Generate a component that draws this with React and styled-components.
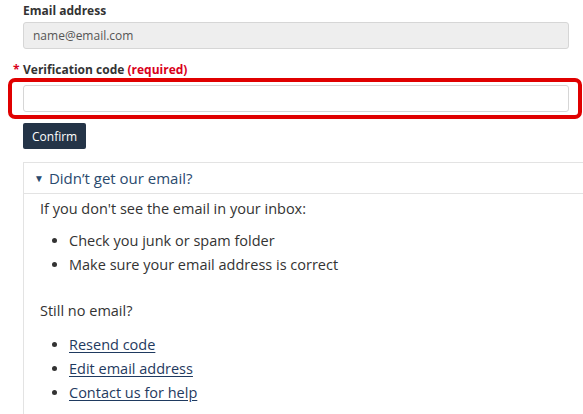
import React from "react";
import styled, { createGlobalStyle } from "styled-components";

const Global = createGlobalStyle`
  html, body { margin: 0; padding: 0; background: #fff; overflow: hidden; }
  body { font-family: "Open Sans", "Noto Sans", sans-serif; color: #333; }
`;

const Page = styled.div`
  width: 546px;
  padding: 2px 0 0 23px;
`;

const Label = styled.label`
  display: block;
  font-size: 12px;
  font-weight: 700;
  color: #333;
  line-height: ${(p) => p.$lh || 18}px;
  margin-top: ${(p) => p.$mt || 0}px;
  margin-bottom: ${(p) => p.$mb || 0}px;
  position: relative;
`;

const Star = styled.span`
  position: absolute;
  left: -10px;
  color: #d9001b;
`;

const Required = styled.span`
  color: #d9001b;
`;

const Input = styled.input`
  display: block;
  box-sizing: border-box;
  width: 546px;
  height: 27px;
  margin: 0;
  padding: 0 9px;
  border: 1px solid #d6d6d6;
  border-radius: 3px;
  background: ${(p) => (p.disabled ? "#eeeeee" : "#fff")};
  font-family: inherit;
  font-size: 12px;
  color: #555;
  outline: none;
`;

const FocusRing = styled.div`
  box-sizing: border-box;
  margin-left: -15px;
  width: 574px;
  padding: 3px 9px 3px 11px;
  border: 4px solid #e00000;
  border-radius: 7px;
`;

const Button = styled.button`
  margin-top: 4px;
  height: 26px;
  padding: 0 9px;
  border: none;
  border-radius: 2px;
  background: #243447;
  color: #fff;
  font-family: inherit;
  font-size: 12px;
  cursor: pointer;
`;

const Details = styled.div`
  margin-top: 13px;
  width: 600px;
  border: 1px solid #e3e3e3;
  border-right: none;
  border-bottom: none;
`;

const Summary = styled.div`
  height: 30px;
  display: flex;
  align-items: center;
  gap: 5px;
  padding-left: 10px;
  border-bottom: 1px solid #e3e3e3;
  color: #2a4a6e;
  font-size: 15px;
`;

const Caret = styled.span`
  font-size: 10px;
  line-height: 1;
`;

const Body = styled.div`
  padding: 3px 0 10px 16px;
  font-size: 14.5px;
  line-height: 24px;
  color: #333;
`;

const Para = styled.p`
  margin: ${(p) => p.$mt || 0}px 0 0;
`;

const List = styled.ul`
  margin: ${(p) => p.$mt || 8}px 0 0;
  padding-left: 29px;
`;

const Link = styled.a`
  color: #1f3a60;
  text-decoration: underline;
  text-underline-offset: 2px;
`;

export default function App() {
  return (
    <>
      <Global />
      <Page>
        <Label $mb={2}>Email address</Label>
        <Input disabled value="name@email.com" readOnly />
        <Label $mt={13} $lh={16}>
          <Star>*</Star>
          Verification code <Required>(required)</Required>
        </Label>
        <FocusRing>
          <Input />
        </FocusRing>
        <Button>Confirm</Button>
        <Details>
          <Summary>
            <Caret>▼</Caret>
            <span>Didn’t get our email?</span>
          </Summary>
          <Body>
            <Para>If you don't see the email in your inbox:</Para>
            <List>
              <li>Check you junk or spam folder</li>
              <li>Make sure your email address is correct</li>
            </List>
            <Para $mt={22}>Still no email?</Para>
            <List $mt={10}>
              <li><Link href="#">Resend code</Link></li>
              <li><Link href="#">Edit email address</Link></li>
              <li><Link href="#">Contact us for help</Link></li>
            </List>
          </Body>
        </Details>
      </Page>
    </>
  );
}
